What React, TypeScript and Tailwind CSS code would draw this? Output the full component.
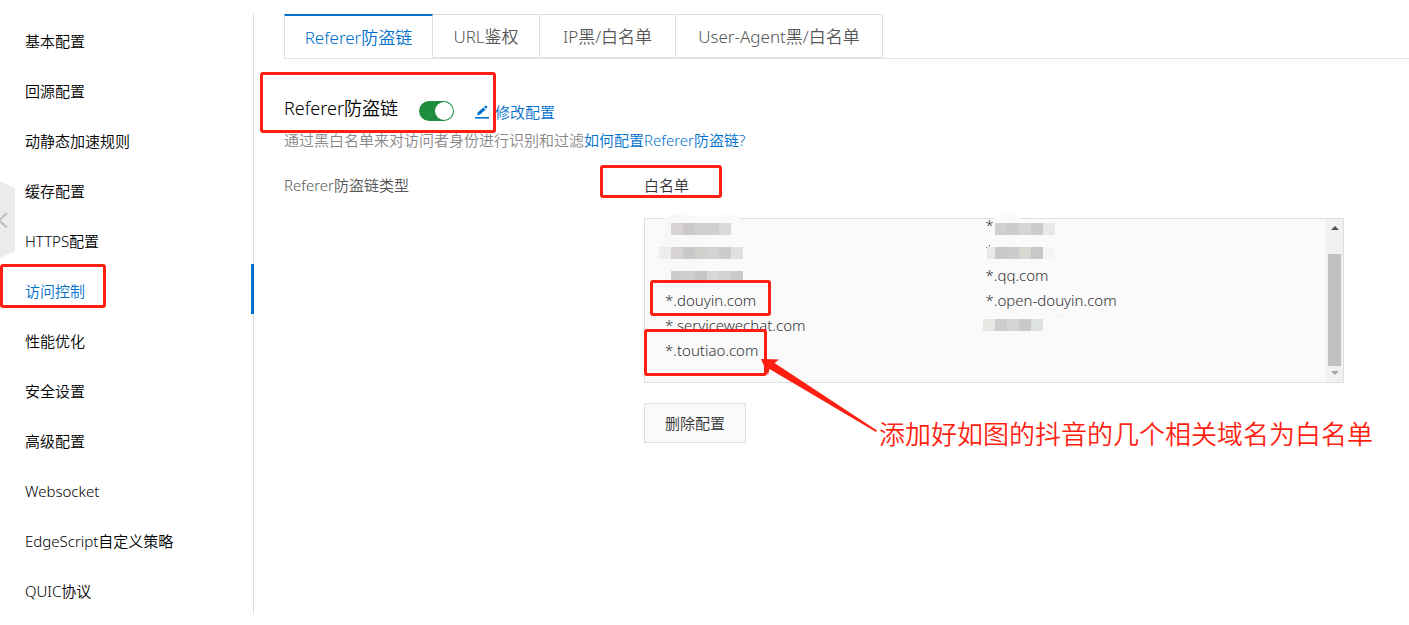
import React, { useState } from 'react';
import clsx from 'clsx';

const NAV_ITEMS = [
  '基本配置',
  '回源配置',
  '动静态加速规则',
  '缓存配置',
  'HTTPS配置',
  '访问控制',
  '性能优化',
  '安全设置',
  '高级配置',
  'Websocket',
  'EdgeScript自定义策略',
  'QUIC协议',
];

const TABS = [
  { name: 'Referer防盗链', width: 'w-[149px]' },
  { name: 'URL鉴权', width: 'w-[107px]' },
  { name: 'IP黑/白名单', width: 'w-[136px]' },
  { name: 'User-Agent黑/白名单', width: 'w-[207px]' },
];

// Whitelist in reading order, two per row. '*' entries are redacted.
const DOMAINS = [
  '', '*',
  '', '*',
  '', '*.qq.com',
  '*.douyin.com', '*.open-douyin.com',
  '*.servicewechat.com', '',
  '*.toutiao.com', '',
];

const CELL = 12;

const MOSAIC = [
  { x: 27, y: 5, colors: ['#d7d3d3', '#cbc9c8', '#d0d0cf', '#cfcfd0', '#d9d9d9'] },
  { x: 15, y: 29, colors: ['#ededed', '#d7d3d3', '#c8c8ca', '#d1d0cd', '#d3d4d6', '#cccccb', '#dfe1e1'] },
  { x: 27, y: 53, colors: ['#cdcccb', '#cfcecd', '#c8c7c5', '#d8d7d6', '#d2d2d5', '#cbcbcb'] },
  { x: 351, y: 5, colors: ['#d1d0cf', '#cccbca', '#d5d5d5', '#cbcbcc', '#e7e9e9'] },
  { x: 343, y: 29, colors: ['#e9e9e9'] },
  { x: 351, y: 29, colors: ['#c9c9c7', '#cbcbcd', '#d9d8d3', '#c7c8ca', '#f3f5f7'] },
  { x: 339, y: 101, colors: ['#e6e7e2', '#cecccf', '#d6d6d5', '#cac9c8', '#dee2e2'] },
];

const Redaction: React.FC = () => (
  <svg className="absolute -left-px -top-[7px] w-[480px] h-[170px] pointer-events-none" viewBox="0 -6 480 170" aria-hidden="true">
    <path d="M18 7Q20-4 30-3Q38-5 44-3H80Q88-5 94-1Q99 2 98 10V34H102V62H22Q12 46 17 29Z" fill="#fafafa" />
    <path d="M22 3Q25-3 32-3Q41-3 42 8H61V70H22Q12 45 20 20Z" fill="#f7f8f8" />
    <path d="M348 12Q348-5 360-5Q370-5 378 2H410V18H352Q348 17 348 12Z" fill="#fafafa" />
    <path d="M343 36Q342 28 352 25H420V42H352V47Q344 44 343 36Z" fill="#fafafa" />
    <path d="M411 96Q418 94 423 101H411Z" fill="#f5f5f5" />
    {MOSAIC.map((row) =>
      row.colors.map((color, i) => (
        <rect key={`${row.x}-${row.y}-${i}`} x={row.x + i * CELL} y={row.y} width={CELL} height={CELL} fill={color} />
      ))
    )}
  </svg>
);

const Sidebar: React.FC = () => (
  <nav className="w-[254px] shrink-0 border-r border-[#dedede]">
    <ul>
      {NAV_ITEMS.map((item) => {
        const active = item === '访问控制';
        return (
          <li key={item} className="relative">
            <a
              href="#"
              aria-current={active ? 'page' : undefined}
              className={clsx('flex h-[50px] items-center pl-[25px] pt-1', active ? 'text-[#0070cc]' : 'text-black')}
            >
              {item}
            </a>
            {active && <span className="absolute -right-px top-0 h-full w-[3px] bg-[#0070cc]" />}
          </li>
        );
      })}
    </ul>
  </nav>
);

const Scrollbar: React.FC = () => (
  <div className="flex w-[17px] shrink-0 flex-col items-center justify-between bg-[#f1f1f1]" aria-hidden="true">
    <svg className="mt-[5px] h-2 w-2" viewBox="0 0 8 8">
      <path d="M0 6L4 2L8 6Z" fill="#505050" />
    </svg>
    <div className="mt-[22px] w-[13px] grow bg-[#c1c1c1]" />
    <svg className="my-1 h-2 w-2" viewBox="0 0 8 8">
      <path d="M0 1L4 5L8 1Z" fill="#a3a3a3" />
    </svg>
  </div>
);

const Annotations: React.FC = () => (
  <div className="pointer-events-none absolute inset-0 text-[#ff1f12]">
    <div className="absolute left-0 top-[264px] h-11 w-[106px] rounded-[3px] border-3" />
    <div className="absolute left-[260px] top-[72px] h-[61px] w-[236px] rounded-[3px] border-3" />
    <div className="absolute left-[600px] top-[165px] h-[33px] w-[122px] rounded-[3px] border-3" />
    <div className="absolute left-[650px] top-[280px] h-9 w-[121px] rounded-[3px] border-3" />
    <div className="absolute left-[644px] top-[329px] h-[47px] w-[123px] rounded-[3px] border-3" />
    <svg className="absolute left-[760px] top-[358px] h-[76px] w-[120px]" viewBox="0 0 120 76" aria-hidden="true">
      <path d="M1 1L19 1.5L14.5 5L117 72.5L116 74L9.5 11L8 17Z" fill="currentColor" />
    </svg>
    <p className="absolute left-[879px] top-[414px] whitespace-nowrap text-[26px] leading-10">
      添加好如图的抖音的几个相关域名为白名单
    </p>
  </div>
);

export default function App() {
  const [tab, setTab] = useState(TABS[0].name);
  const [enabled, setEnabled] = useState(true);

  return (
    <div className="relative flex min-h-screen items-start overflow-hidden bg-white pt-3.5 font-['Noto_Sans','Noto_Sans_CJK_SC',sans-serif] text-[15px] font-[350] leading-[25px] text-[#333]">
      <Sidebar />

      <button type="button" aria-label="收起" className="absolute left-0 top-[181px]">
        <svg className="h-[77px] w-[15px]" viewBox="0 0 15 77">
          <path d="M0 0L15 7V70L0 77Z" fill="#ebebeb" />
          <path d="M7 32L-1 39.5L7 46.5" fill="none" stroke="#bdbdbd" strokeWidth="2" />
        </svg>
      </button>

      <main className="min-w-0 grow pl-[30px]">
        {/* Tabs */}
        <div role="tablist" className="flex h-[45px] border-b border-[#e3e4e6]">
          {TABS.map(({ name, width }) => (
            <button
              key={name}
              type="button"
              role="tab"
              aria-selected={tab === name}
              onClick={() => setTab(name)}
              className={clsx(
                'whitespace-nowrap border-r border-[#dedede] text-[17px] first:border-l',
                width,
                tab === name ? 'border-t-2 border-t-[#0070cc] text-[#0070cc]' : 'border-y text-[#555]'
              )}
            >
              {name}
            </button>
          ))}
        </div>

        {/* Title and switch */}
        <div className="mt-[34px] flex h-8 items-center">
          <h2 className="mb-0.5 text-lg text-black">Referer防盗链</h2>
          <input
            type="checkbox"
            role="switch"
            aria-label="Referer防盗链"
            checked={enabled}
            onChange={(e) => setEnabled(e.target.checked)}
            className="relative ml-[21px] mt-1 h-5 w-[35px] appearance-none rounded-full bg-[#b3b3b3] before:absolute before:left-px before:top-px before:size-[18px] before:rounded-full before:bg-white checked:bg-[#1e8e3e] checked:before:left-4"
          />
          <a href="#" className="ml-[21px] mt-1.5 flex items-center gap-1.5 text-[#0070cc]">
            <svg className="size-3.5" viewBox="0 0 14 14" fill="currentColor" aria-hidden="true">
              <path d="M0 12H14V13.6H0Z" />
              <path d="M2 10.4L3 7.3L8.3 2.4L10.6 4.4L5.2 9.4Z" />
              <path d="M9 1.8L10.3 .7Q10.9 .4 11.4.8L12.2 1.5Q12.6 2 12.2 2.6L11.2 3.8Z" />
            </svg>
            修改配置
          </a>
        </div>
        <p className="mt-[3px] text-[#888]">
          通过黑白名单来对访问者身份进行识别和过滤
          <a href="#" className="text-[#0070cc]">如何配置Referer防盗链?</a>
        </p>

        {/* Config details */}
        <dl className="mt-5 flex">
          <dt className="w-[32%] shrink-0 text-[#555]">Referer防盗链类型</dt>
          <dd className="min-w-0 grow">
            <p>白名单</p>
            <div className="relative mt-5 flex h-[165px] max-w-[700px] border border-[#dedede] bg-[#fafafa]">
              <div className="grow px-5">
                <ul className="-mt-1.5 grid grid-cols-2">
                  {DOMAINS.map((domain, i) => (
                    <li key={i} className="h-[25px]">{domain}</li>
                  ))}
                </ul>
              </div>
              <Scrollbar />
              <Redaction />
            </div>
            <button type="button" className="mt-5 h-10 border border-[#dedede] bg-[#fafafa] px-5">
              删除配置
            </button>
          </dd>
        </dl>
      </main>

      <Annotations />
    </div>
  );
}
